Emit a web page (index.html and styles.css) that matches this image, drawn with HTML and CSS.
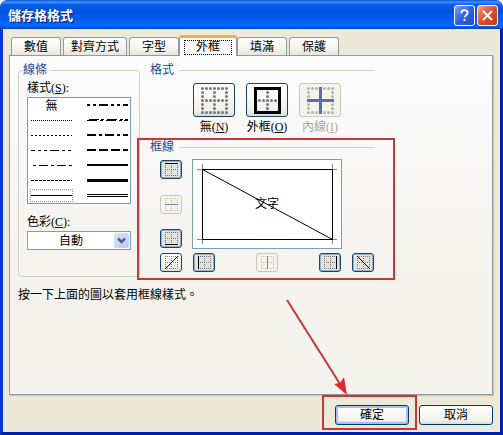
FILE: index.html
```html
<!DOCTYPE html>
<html lang="zh-Hant">
<head>
    <meta charset="utf-8">
    <title>儲存格格式</title>
    <link rel="stylesheet" href="styles.css">
</head>
<body>
    <!-- shared icon parts -->
    <svg class="defs" aria-hidden="true">
        <symbol id="grid-big" viewBox="0 0 27 27">
            <path d="M1.500 1.500h24.100M1.500 13.500h24.100M1.500 25.500h24.100M1.500 1.500v24.100M13.500 1.500v24.100M25.500 1.500v24.100" fill="none" stroke="currentColor" stroke-width="3" stroke-linecap="round" stroke-dasharray="0 4"/>
        </symbol>
        <symbol id="grid" viewBox="0 0 13 13">
            <path d="M0 .5h13M0 6.500h13M0 12.500h13M.5 0v13M6.500 0v13M12.500 0v13" fill="none" stroke="currentColor" stroke-dasharray="1 1"/>
        </symbol>
    </svg>

    <div class="dialog">
        <div class="title-bar">
            <h1>儲存格格式</h1>
            <button type="button" class="help" aria-label="說明">
                <svg width="21" height="21" viewBox="0 0 21 21"><path d="M7 8c0-2.500 1.500-3.500 3.500-3.500S14 5.700 14 7.500c0 2.500-3 2.500-3.500 5M10.500 14.500v2" fill="none" stroke="#fff" stroke-width="2"/></svg>
            </button>
            <button type="button" class="close" aria-label="關閉">
                <svg width="21" height="21" viewBox="0 0 21 21"><path d="M5.500 5.500l10 10M15.500 5.500l-10 10" stroke="#fff" stroke-width="2.200"/></svg>
            </button>
        </div>

        <div class="client">
            <div class="tabs" role="tablist">
                <button type="button" role="tab" class="tab">數值</button>
                <button type="button" role="tab" class="tab wide">對齊方式</button>
                <button type="button" role="tab" class="tab">字型</button>
                <button type="button" role="tab" class="tab active" aria-selected="true"><span>外框</span></button>
                <button type="button" role="tab" class="tab">填滿</button>
                <button type="button" role="tab" class="tab">保護</button>
            </div>

            <div class="panel">
                <div class="columns">
                    <fieldset class="lines">
                        <legend>線條</legend>
                        <div class="label" id="style-label">樣式(<u>S</u>):</div>
                        <div class="style-list" role="radiogroup" aria-labelledby="style-label">
                            <label><input type="radio" name="style">無</label>
                            <label><input type="radio" name="style" aria-label="粗雙點虛線"><svg width="41" height="5"><path d="M0 2h41" stroke="#000" stroke-width="2" stroke-dasharray="3 3 3 3 9 3"/></svg></label>
                            <label><input type="radio" name="style" aria-label="點線"><svg width="41" height="5"><path d="M0 2.500h41" stroke="#000" stroke-dasharray="1 1"/></svg></label>
                            <label><input type="radio" name="style" aria-label="斜虛線"><svg width="41" height="5"><path d="M0 2.500h10M13 2.500h3M19 2.500h10M32 2.500h3M37 2.500h4M2 1.500h10M14 1.500h3M20 1.500h10M33 1.500h3M38 1.500h3" stroke="#000"/></svg></label>
                            <label><input type="radio" name="style" aria-label="細點線"><svg width="41" height="5"><path d="M0 2.500h41" stroke="#000" stroke-dasharray="2 2"/></svg></label>
                            <label><input type="radio" name="style" aria-label="粗點虛線"><svg width="41" height="5"><path d="M0 2h41" stroke="#000" stroke-width="2" stroke-dasharray="9 3 3 3"/></svg></label>
                            <label><input type="radio" name="style" aria-label="細雙點虛線"><svg width="41" height="5"><path d="M0 2.500h41" stroke="#000" stroke-dasharray="9 3 3 3 3 3" stroke-dashoffset="5"/></svg></label>
                            <label><input type="radio" name="style" aria-label="粗虛線"><svg width="41" height="5"><path d="M0 2h41" stroke="#000" stroke-width="2" stroke-dasharray="9 3"/></svg></label>
                            <label><input type="radio" name="style" aria-label="細點虛線"><svg width="41" height="5"><path d="M2 2.500h39" stroke="#000" stroke-dasharray="3 3 9 3"/></svg></label>
                            <label><input type="radio" name="style" aria-label="中實線"><svg width="41" height="5"><path d="M0 2h41" stroke="#000" stroke-width="2"/></svg></label>
                            <label><input type="radio" name="style" aria-label="細虛線"><svg width="41" height="5"><path d="M0 2.500h41" stroke="#000" stroke-dasharray="3 1"/></svg></label>
                            <label><input type="radio" name="style" aria-label="粗實線"><svg width="41" height="5"><path d="M0 2.500h41" stroke="#000" stroke-width="3"/></svg></label>
                            <label><input type="radio" name="style" aria-label="細實線" checked><svg width="41" height="5"><path d="M0 2.500h41" stroke="#000"/></svg></label>
                            <label><input type="radio" name="style" aria-label="雙線"><svg width="41" height="5"><path d="M0 1.500h41M0 3.500h41" stroke="#000"/></svg></label>
                        </div>
                        <label class="label color-label" for="color">色彩(<u>C</u>):</label>
                        <div class="combo">
                            <select id="color">
                                <option>自動</option>
                            </select>
                            <svg class="arrow" width="15" height="15" viewBox="0 0 15 15" aria-hidden="true"><path d="M4 5.500L7.500 9 11 5.500" fill="none" stroke="#4d6185" stroke-width="2.500"/></svg>
                        </div>
                    </fieldset>

                    <div class="right">
                        <fieldset class="group">
                            <legend>格式</legend>
                            <div class="presets">
                                <div class="preset">
                                    <button type="button" id="none" class="btn"><svg width="27" height="27"><use href="#grid-big"/></svg></button>
                                    <label for="none">無(<u>N</u>)</label>
                                </div>
                                <div class="preset">
                                    <button type="button" id="outline" class="btn"><svg width="27" height="27"><path d="M1.500 1.500h24v24h-24z" fill="none" stroke="#000" stroke-width="3"/><path d="M5.500 13.500h16.100M13.500 5.500v16.100" stroke="#777" stroke-width="3" stroke-linecap="round" stroke-dasharray="0 4"/></svg></button>
                                    <label for="outline">外框(<u>O</u>)</label>
                                </div>
                                <div class="preset disabled">
                                    <button type="button" id="inside" class="btn" disabled><svg width="27" height="27"><use href="#grid-big"/><path d="M0 13.500h27M13.500 0v27" stroke="#5870a4" stroke-width="3"/></svg></button>
                                    <label for="inside">內線(<u>I</u>)</label>
                                </div>
                            </div>
                        </fieldset>

                        <div class="marked">
                            <fieldset class="group">
                                <legend>框線</legend>
                                <div class="editor">
                                    <div class="side">
                                        <button type="button" class="btn small on" aria-label="上框線"><svg width="13" height="13"><use href="#grid"/><path d="M0 .5h13" stroke="#000"/></svg></button>
                                        <button type="button" class="btn small" aria-label="水平內線" disabled><svg width="13" height="13"><use href="#grid"/><path d="M0 6.500h13" stroke="#7581a3"/></svg></button>
                                        <button type="button" class="btn small on" aria-label="下框線"><svg width="13" height="13"><use href="#grid"/><path d="M0 12.500h13" stroke="#000"/></svg></button>
                                    </div>
                                    <div class="preview">
                                        <svg width="148" height="88" viewBox="0 0 148 88" aria-hidden="true">
                                            <path d="M4 9.500h10M9.500 4v10M134 9.500h10M139.500 4v10M4 79.500h10M9.500 74v10M134 79.500h10M139.500 74v10" stroke="#888"/>
                                            <path d="M9.500 9.500h130v70h-130zl130 70" fill="none" stroke="#000"/>
                                        </svg>
                                        <span>文字</span>
                                    </div>
                                    <button type="button" class="btn small corner" aria-label="左斜線"><svg width="13" height="13"><use href="#grid"/><path d="M0 13L13 0" stroke="#000"/></svg></button>
                                    <div class="bottom">
                                        <button type="button" class="btn small on" aria-label="左框線"><svg width="13" height="13"><use href="#grid"/><path d="M.5 0v13" stroke="#000"/></svg></button>
                                        <button type="button" class="btn small" aria-label="垂直內線" disabled><svg width="13" height="13"><use href="#grid"/><path d="M6.500 0v13" stroke="#7581a3"/></svg></button>
                                        <button type="button" class="btn small on" aria-label="右框線"><svg width="13" height="13"><use href="#grid"/><path d="M12.500 0v13" stroke="#000"/></svg></button>
                                    </div>
                                    <button type="button" class="btn small on" aria-label="右斜線"><svg width="13" height="13"><use href="#grid"/><path d="M0 0l13 13" stroke="#000"/></svg></button>
                                </div>
                            </fieldset>
                            <div class="mark"></div>
                        </div>
                    </div>
                </div>
                <p>按一下上面的圖以套用框線樣式。</p>
            </div>

            <div class="footer">
                <div class="ok">
                    <button type="button" class="command default">確定</button>
                    <div class="mark"></div>
                    <svg class="pointer" width="66" height="98" viewBox="0 0 66 98" aria-hidden="true">
                        <path d="M2 2l53 84" stroke="#c8363a" stroke-width="2"/>
                        <path d="M62 97L49 86l6-1 4-6z" fill="#dc2a30"/>
                    </svg>
                </div>
                <button type="button" class="command">取消</button>
            </div>
        </div>
    </div>
</body>
</html>
```

FILE: styles.css
```css
* {
    box-sizing: border-box;
}

body {
    margin: 0;
    background-color: #fff;
    color: #000;
    font-family: "Liberation Serif", "Noto Sans CJK TC", sans-serif;
    font-size: 12px;
    line-height: 14px;
}

button,
select {
    margin: 0;
    padding: 0;
    font: inherit;
    color: inherit;
}

svg {
    display: block;
}

.defs {
    position: absolute;
    width: 0;
    height: 0;
}

.dialog {
    display: flex;
    flex-direction: column;
    min-height: 100vh;
}

/* title bar */
.title-bar {
    display: flex;
    align-items: center;
    gap: 2px;
    height: 29px;
    padding: 2px 5px 0 8px;
    border-radius: 7px 7px 0 0;
    background: linear-gradient(#0a50d0 0%, #3d95ff 7%, #0a5ce8 16%, #0053e0 35%, #0058ee 60%, #0468fd 85%, #0460f4 92%, #0040c0 100%);
}

.title-bar h1 {
    flex: 1;
    margin: 0;
    color: #fff;
    font-size: 13px;
    font-weight: bold;
    text-shadow: 1px 1px 1px #0a1883;
}

.title-bar button {
    width: 21px;
    height: 21px;
    border: 1px solid #fff;
    border-radius: 3px;
    display: flex;
    align-items: center;
    justify-content: center;
}

.help {
    background: linear-gradient(135deg, #7ca2f4, #2f62dc 50%, #2050cc);
}

.close {
    background: linear-gradient(135deg, #f0a088, #dc5030 50%, #c43c14);
}

.client {
    flex: 1;
    display: flex;
    flex-direction: column;
    padding: 6px 7px 7px 6px;
    border: 3px solid #0838cc;
    border-top: none;
    border-right-color: #0020b0;
    border-bottom-color: #0020a8;
    background-color: #ece9d8;
}

/* tabs */
.tabs {
    display: flex;
    align-items: flex-end;
    gap: 2px;
    height: 20px;
    padding-left: 2px;
}

.tab {
    width: 50px;
    height: 18px;
    border: 1px solid #919b9c;
    border-bottom: none;
    border-radius: 3px 3px 0 0;
    background: linear-gradient(#fff, #f4f3ee 60%, #e8e6dc);
}

.tab.wide {
    width: 64px;
}

.tab.active {
    position: relative;
    width: 58px;
    height: 21px;
    margin: 0 -2px -1px;
    padding: 1px 4px;
    border-top: 3px solid #f0b040;
    background: #fcfcfe;
}

.tab.active span {
    display: block;
    height: 15px;
    border: 1px dotted #000;
    line-height: 12px;
}

.panel {
    flex: 1;
    padding: 7px 8px;
    border: 1px solid #919b9c;
    background: linear-gradient(#fcfcfe, #f4f3ee 65%);
    box-shadow: 1px 1px 1px #c8c6b8;
}

.columns {
    display: flex;
    gap: 10px;
    align-items: flex-start;
}

fieldset {
    min-width: 0;
    margin: 0;
    padding: 0;
    border: 0 solid #d0cfc0;
}

legend {
    height: 14px;
    margin: 0;
    padding: 0 5px 0 0;
    color: #1848a0;
}

/* line styles */
.lines {
    width: 122px;
    padding: 4px 8px 26px;
    border-width: 1px;
    border-radius: 4px;
}

.lines legend {
    margin-left: -4px;
    padding: 0 2px 0 0;
}

.label {
    display: block;
    margin-bottom: 2px;
}

.style-list {
    display: grid;
    grid-template-columns: 43px 43px;
    grid-auto-rows: 15px;
    column-gap: 13px;
    padding: 0 2px;
    border: 1px solid #7f9db9;
    background-color: #fff;
}

.style-list label {
    display: flex;
    align-items: center;
    justify-content: center;
}

.style-list input {
    position: absolute;
    opacity: 0;
    margin: 0;
}

.style-list label:has(input:checked) {
    height: 13px;
    align-self: center;
    outline: 1px dotted #999;
    outline-offset: -1px;
}

.color-label {
    margin-top: 11px;
}

.combo {
    position: relative;
}

.combo select {
    display: block;
    width: 100%;
    height: 19px;
    padding: 0 20px 0 31px;
    border: 1px solid #7f9db9;
    border-radius: 0;
    background-color: #fff;
    appearance: none;
}

.combo .arrow {
    position: absolute;
    top: 2px;
    right: 2px;
    border-radius: 2px;
    background: linear-gradient(135deg, #dce6fd, #b4c8f6);
    pointer-events: none;
}

/* presets and border buttons */
.right {
    width: 225px;
}

.group {
    border-top-width: 1px;
}

.presets {
    display: flex;
    gap: 11px;
    padding: 6px 0 6px 43px;
}

.preset {
    display: flex;
    flex-direction: column;
    align-items: center;
    gap: 3px;
    width: 42px;
    white-space: nowrap;
}

.disabled {
    color: #aca899;
}

.btn {
    display: flex;
    align-items: center;
    justify-content: center;
    width: 42px;
    height: 34px;
    padding: 1px 0 0 1px;
    border: 1px solid #1c4468;
    border-radius: 3px;
    background: linear-gradient(#fff, #f2f1ea 80%, #dedbd0);
    color: #777;
}

.btn:disabled {
    border-color: #cac8bb;
    background: #f5f4ea;
    color: #a8b4c8;
}

.small {
    width: 22px;
    height: 19px;
    padding: 0 0 0 1px;
}

.small:disabled {
    color: #bbb;
}

.on {
    background: #e3e2dc;
    box-shadow: inset 0 0 0 1px #9ab0c8;
}

.editor {
    display: grid;
    grid-template-columns: 22px 150px 22px;
    gap: 4px 10px;
    padding: 5px 0 0 10px;
}

.side {
    display: flex;
    flex-direction: column;
    justify-content: space-between;
    padding: 1px 0;
}

.preview {
    position: relative;
    display: flex;
    align-items: center;
    justify-content: center;
    height: 90px;
    border: 1px solid #7f9db9;
    background-color: #fff;
}

.preview span {
    position: absolute;
}

.corner {
    grid-column: 1;
}

.bottom {
    display: flex;
    justify-content: space-between;
    padding: 0 1px;
}

p {
    margin: 11px 0 0;
}

/* footer */
.footer {
    display: flex;
    justify-content: flex-end;
    gap: 10px;
    padding-top: 10px;
}

.command {
    display: block;
    width: 74px;
    height: 20px;
    border: 1px solid #003c74;
    border-radius: 3px;
    background: linear-gradient(#fff, #f2f1ea 80%, #dcd8cc);
}

.default {
    box-shadow: inset 0 0 0 2px #a8c0ee;
}

/* red callouts */
.marked,
.ok {
    position: relative;
}

.mark {
    position: absolute;
    inset: -2px -20px -8px -13px;
    border: 2px solid #c8363a;
    pointer-events: none;
}

.ok .mark {
    inset: -10px -8px -5px -13px;
}

.pointer {
    position: absolute;
    left: -50px;
    top: -107px;
    pointer-events: none;
}
```
